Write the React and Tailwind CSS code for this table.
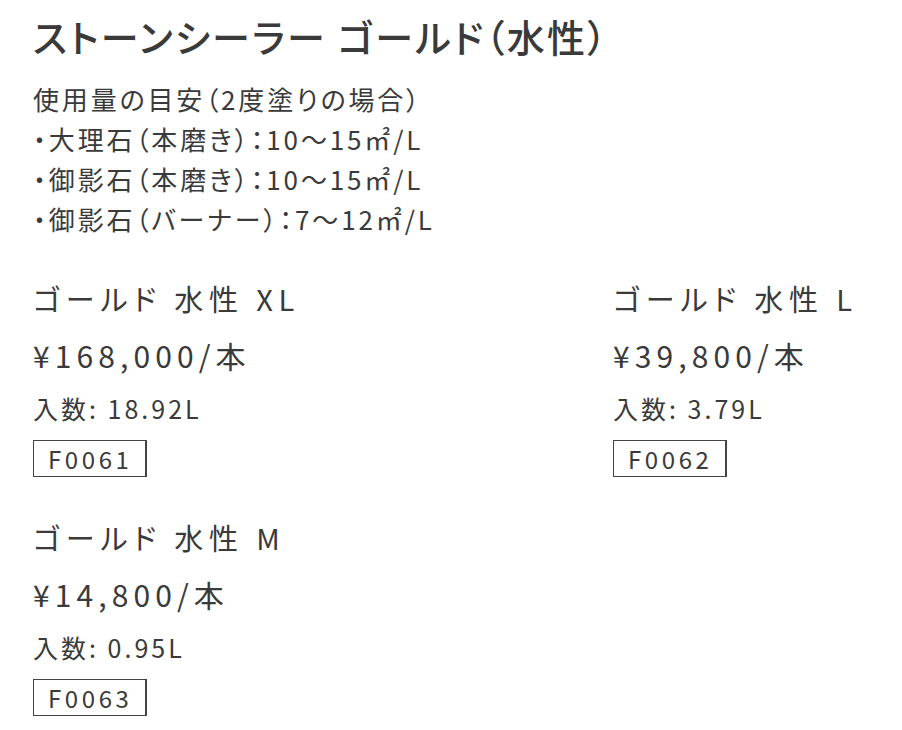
const usage = [
  '・大理石（本磨き）：10〜15㎡/L',
  '・御影石（本磨き）：10〜15㎡/L',
  '・御影石（バーナー）：7〜12㎡/L',
];

const products = [
  { name: 'ゴールド 水性 XL', price: '¥168,000/本', volume: '入数: 18.92L', code: 'F0061' },
  { name: 'ゴールド 水性 L', price: '¥39,800/本', volume: '入数: 3.79L', code: 'F0062' },
  { name: 'ゴールド 水性 M', price: '¥14,800/本', volume: '入数: 0.95L', code: 'F0063' },
];

function Product({ item }) {
  return (
    <div className="flex flex-col items-start">
      <h3 className="text-[29px] leading-[40px] tracking-[0.2em]">{item.name}</h3>
      <p className="mt-[17px] text-[30px] leading-[40px] tracking-[0.17em]">{item.price}</p>
      <p className="mt-[18px] text-[25px] leading-[30px] tracking-[0.12em]">{item.volume}</p>
      <span className="mt-[17px] h-[37px] w-[114px] border border-r-2 border-[#444] pl-[14px] text-[24px] leading-[35px] tracking-[0.15em]">
        {item.code}
      </span>
    </div>
  );
}

export default function App() {
  return (
    <div
      className="min-h-screen bg-white px-[33px] pt-[11px] text-[#3a3a3a] [font-feature-settings:'palt']"
      style={{ fontFamily: '"Noto Sans CJK JP", "Noto Sans", sans-serif' }}
    >
      <h1 className="text-[38px] leading-[50px] font-medium tracking-[0.06em]">ストーンシーラー ゴールド（水性）</h1>
      <div className="mt-[18px] text-[26px] leading-[40px] tracking-[0.11em]">
        <p>使用量の目安（2度塗りの場合）</p>
        {usage.map((line) => (
          <p key={line}>{line}</p>
        ))}
      </div>
      <div className="mt-[39px] grid grid-cols-[580px_1fr] gap-y-[40px]">
        {products.map((item) => (
          <Product key={item.code} item={item} />
        ))}
      </div>
    </div>
  );
}
